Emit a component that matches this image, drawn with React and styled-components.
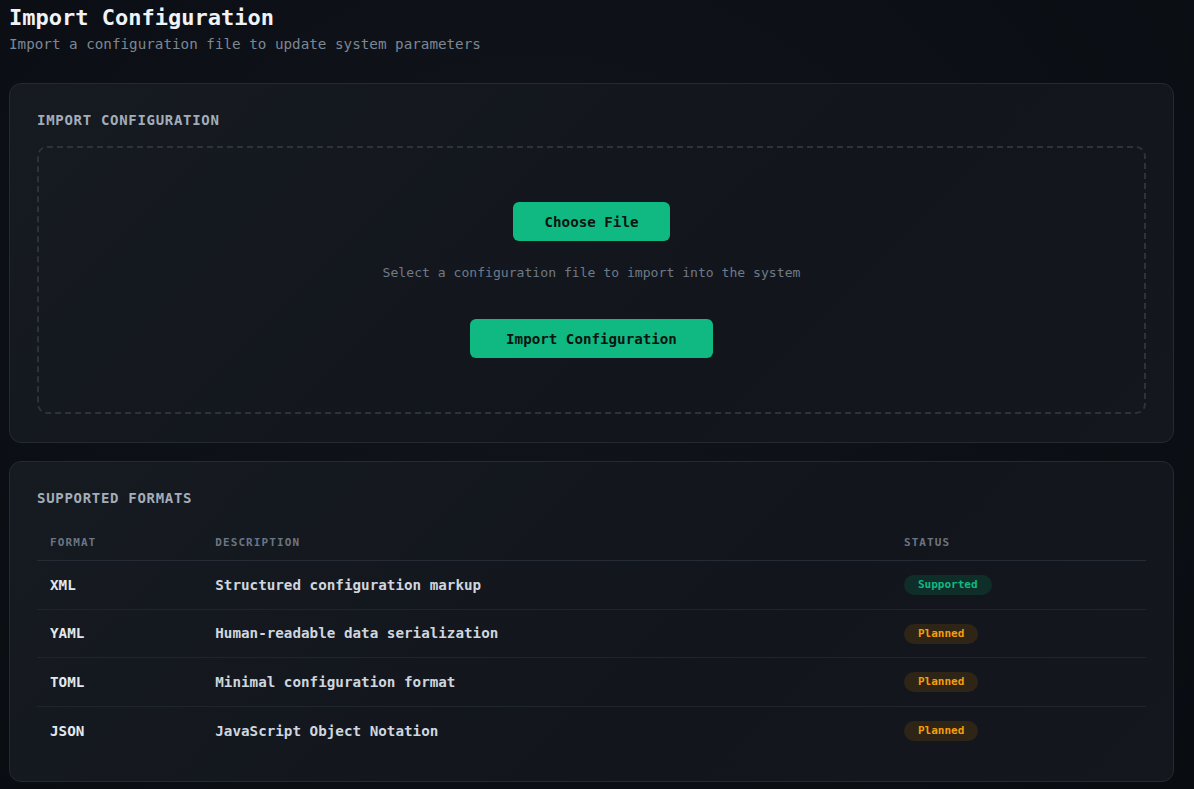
import React from "react";
import styled, { createGlobalStyle } from "styled-components";

const GlobalStyle = createGlobalStyle`
  html, body {
    margin: 0;
    padding: 0;
    background: #0b0f14;
  }
  body {
    font-family: "DejaVu Sans Mono", "Liberation Mono", monospace;
    color: #e6edf3;
    min-height: 789px;
    background: radial-gradient(ellipse at 45% 35%, #12161c 0%, #0c1016 55%, #090c11 100%);
  }
`;

const Page = styled.div`
  padding: 5px 20px 8px 9px;
  box-sizing: border-box;
  width: 1194px;
`;

const Title = styled.h1`
  margin: 0;
  font-size: 22px;
  line-height: 26px;
  font-weight: 700;
  color: #f0f3f6;
`;

const Subtitle = styled.p`
  margin: 5px 0 0;
  font-size: 14.25px;
  line-height: 17px;
  color: #7d8794;
`;

const Card = styled.section`
  margin-top: ${(p) => p.$gap}px;
  border: 1px solid #232a33;
  border-radius: 12px;
  background: linear-gradient(135deg, #161a21 0%, #12161c 60%, #14181e 100%);
  padding: 27px 27px ${(p) => p.$bottom}px;
`;

const SectionTitle = styled.h2`
  margin: 0;
  font-size: 14px;
  line-height: 18px;
  font-weight: 700;
  letter-spacing: 0.05em;
  color: #a3adba;
  text-transform: uppercase;
`;

const DropZone = styled.div`
  margin-top: 17px;
  border: 2px dashed #2c333d;
  border-radius: 10px;
  padding: 54px 20px 54px;
  display: flex;
  flex-direction: column;
  align-items: center;
`;

const Button = styled.button`
  height: 39px;
  padding: 0 ${(p) => p.$pad}px;
  border: none;
  border-radius: 6px;
  background: #10b981;
  color: #0a1410;
  font-family: inherit;
  font-size: 14.2px;
  font-weight: 700;
  cursor: pointer;
`;

const Hint = styled.p`
  margin: 22px 0 36px;
  font-size: 13.1px;
  line-height: 20px;
  color: #6f7a88;
`;

const Table = styled.table`
  margin-top: 17px;
  width: 100%;
  border-collapse: collapse;
  table-layout: fixed;
`;

const Th = styled.th`
  box-sizing: border-box;
  width: ${(p) => p.$w};
  text-align: left;
  padding: 12px 13px 11px;
  font-size: 11px;
  line-height: 13px;
  font-weight: 700;
  letter-spacing: 0.1em;
  color: #6b7583;
  border-bottom: 1px solid #262c35;
`;

const Tr = styled.tr`
  & + & td {
    border-top: 1px solid #1f252d;
  }
`;

const Td = styled.td`
  box-sizing: border-box;
  height: 48.6px;
  padding: 0 13px;
  vertical-align: middle;
  font-size: 14.25px;
  line-height: 20px;
  font-weight: 700;
  color: ${(p) => (p.$strong ? "#e3e8ee" : "#cfd6df")};
`;

const Badge = styled.span`
  display: inline-block;
  vertical-align: middle;
  height: 20px;
  line-height: 20px;
  padding: 0 14px;
  border-radius: 10px;
  font-size: 11px;
  font-weight: 700;
  color: ${(p) => (p.$ok ? "#10b981" : "#f59e0b")};
  background: ${(p) => (p.$ok ? "#0f2e29" : "#2e2517")};
`;

const formats = [
  { name: "XML", desc: "Structured configuration markup", ok: true },
  { name: "YAML", desc: "Human-readable data serialization", ok: false },
  { name: "TOML", desc: "Minimal configuration format", ok: false },
  { name: "JSON", desc: "JavaScript Object Notation", ok: false },
];

export default function App() {
  return (
    <>
      <GlobalStyle />
      <Page>
        <Title>Import Configuration</Title>
        <Subtitle>Import a configuration file to update system parameters</Subtitle>

        <Card $gap={30} $bottom={28}>
          <SectionTitle>Import Configuration</SectionTitle>
          <DropZone>
            <Button $pad={32}>Choose File</Button>
            <Hint>Select a configuration file to import into the system</Hint>
            <Button $pad={36}>Import Configuration</Button>
          </DropZone>
        </Card>

        <Card $gap={18} $bottom={26}>
          <SectionTitle>Supported Formats</SectionTitle>
          <Table>
            <thead>
              <tr>
                <Th $w="14.9%">FORMAT</Th>
                <Th $w="62.1%">DESCRIPTION</Th>
                <Th $w="23%">STATUS</Th>
              </tr>
            </thead>
            <tbody>
              {formats.map((f) => (
                <Tr key={f.name}>
                  <Td $strong>{f.name}</Td>
                  <Td>{f.desc}</Td>
                  <Td>
                    <Badge $ok={f.ok}>{f.ok ? "Supported" : "Planned"}</Badge>
                  </Td>
                </Tr>
              ))}
            </tbody>
          </Table>
        </Card>
      </Page>
    </>
  );
}
